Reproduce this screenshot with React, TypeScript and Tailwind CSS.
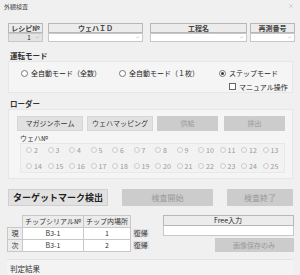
import { ChevronDown, X } from "lucide-react";

const font = { fontFamily: '"Noto Sans CJK JP", "Noto Sans", sans-serif' };

function Radio({ label, checked }: { label: string; checked?: boolean }) {
  return (
    <div className="flex items-center gap-[3px]">
      <span className="w-[7px] h-[7px] rounded-full border border-[#777] bg-white flex items-center justify-center">
        {checked && <span className="w-[3px] h-[3px] rounded-full bg-[#333]" />}
      </span>
      <span>{label}</span>
    </div>
  );
}

function WaferRadio({ n }: { n: number }) {
  return (
    <div className="w-[21.8px] flex items-center gap-[2px] text-[#999]">
      <span className="w-[6px] h-[6px] rounded-full border border-[#ccc] bg-[#f4f4f4]" />
      <span>{n}</span>
    </div>
  );
}

function Combo({ value, gray, className }: { value?: string; gray?: boolean; className: string }) {
  return (
    <div
      className={`h-[9px] border border-[#c8c8c8] flex items-center justify-end pr-[2px] gap-[4px] ${
        gray ? "bg-[#e4e4e4]" : "bg-white"
      } ${className}`}
    >
      {value && <span className="text-[7px] font-normal text-[#333]">{value}</span>}
      <ChevronDown size={5} strokeWidth={2} className="text-[#999]" />
    </div>
  );
}

export default function App() {
  const row1 = [2, 3, 4, 5, 6, 7, 8, 9, 10, 11, 12, 13];
  const row2 = [14, 15, 16, 17, 18, 19, 20, 21, 22, 23, 24, 25];

  return (
    <div className="w-[300px] h-[275px] bg-[#f0f0f0] text-[#222] overflow-hidden" style={font}>
      {/* title bar */}
      <div className="h-[12px] flex items-center justify-between pl-[4px] pr-[6px] text-[6px] text-[#444]">
        <span>外観検査</span>
        <X size={6} strokeWidth={1.5} className="text-[#999]" />
      </div>

      {/* header */}
      <div className="mt-[11px] flex pl-[8px] text-[7px] font-bold text-[#444]">
        <div className="w-[35px] flex flex-col">
          <div className="h-[10px] border border-[#b8b8b8] bg-[#ececec] flex items-center justify-center">レシピ№</div>
          <Combo value="1" gray className="w-[35px]" />
        </div>
        <div className="w-[95px] ml-[5px] flex flex-col">
          <div className="h-[10px] border border-[#b8b8b8] bg-[#ececec] flex items-center justify-center">ウェハＩＤ</div>
          <Combo className="w-[95px]" />
        </div>
        <div className="w-[97px] ml-[7px] flex flex-col">
          <div className="h-[10px] border border-[#b8b8b8] bg-[#ececec] flex items-center justify-center">工程名</div>
          <Combo className="w-[97px]" />
        </div>
        <div className="w-[45px] ml-[3px] flex flex-col">
          <div className="h-[10px] border border-[#b8b8b8] bg-[#ececec] flex items-center justify-center">再測番号</div>
          <Combo className="w-[45px]" />
        </div>
      </div>

      {/* 運転モード */}
      <div className="mt-[9px] h-[10px] pl-[10px] flex items-center text-[7.5px] font-bold text-[#333]">運転モード</div>
      <div className="ml-[8px] mr-[7px] h-[32px] bg-[#f5f5f5] border border-[#e6e6e6] text-[7px] text-[#222]">
        <div className="flex items-center mt-[6px]">
          <div className="ml-[12px] w-[98px]">
            <Radio label="全自動モード（全数）" />
          </div>
          <div className="w-[100px]">
            <Radio label="全自動モード（１枚）" />
          </div>
          <Radio label="ステップモード" checked />
        </div>
        <div className="flex items-center mt-[3px] ml-[220px] gap-[3px]">
          <span className="w-[7px] h-[7px] border border-[#666] bg-white" />
          <span>マニュアル操作</span>
        </div>
      </div>

      {/* ローダー */}
      <div className="mt-[6px] h-[10px] pl-[10px] flex items-center text-[7.5px] font-bold text-[#333]">ローダー</div>
      <div className="ml-[8px] mr-[7px] h-[70px] bg-[#f5f5f5] border border-[#e6e6e6] text-[7px]">
        <div className="flex mt-[6px] ml-[8px]">
          <div className="w-[66px] h-[15px] bg-[#e1e1e1] border border-[#d6d6d6] flex items-center justify-center text-[#333]">マガジンホーム</div>
          <div className="w-[66px] h-[15px] ml-[4px] bg-[#e1e1e1] border border-[#d6d6d6] flex items-center justify-center text-[#333]">ウェハマッピング</div>
          <div className="w-[61px] h-[15px] ml-[4px] bg-[#cccccc] flex items-center justify-center text-[#999]">供給</div>
          <div className="w-[61px] h-[15px] ml-[6px] bg-[#cccccc] flex items-center justify-center text-[#999]">排出</div>
        </div>
        <div className="ml-[11px] mt-[3px] h-[9px] flex items-center text-[#333]">ウェハ№</div>
        <div className="ml-[11px] mr-[7px] h-[30px] border border-[#e8e8e8] bg-[#f2f2f2] pl-[5px] flex flex-col justify-center gap-[5px] text-[7px]">
          <div className="flex">
            {row1.map((n) => (
              <WaferRadio key={n} n={n} />
            ))}
          </div>
          <div className="flex">
            {row2.map((n) => (
              <WaferRadio key={n} n={n} />
            ))}
          </div>
        </div>
      </div>

      {/* action buttons */}
      <div className="mt-[10px] flex pl-[8px]">
        <div className="w-[100px] h-[17px] bg-[#e1e1e1] border border-[#d0d0d0] flex items-center justify-center text-[9px] font-bold text-[#222]">ターゲットマーク検出</div>
        <div className="w-[91px] h-[17px] ml-[14px] bg-[#cccccc] flex items-center justify-center text-[8px] text-[#999]">検査開始</div>
        <div className="w-[66px] h-[17px] ml-[14px] bg-[#cccccc] flex items-center justify-center text-[8px] text-[#999]">検査終了</div>
      </div>

      {/* chips and free input */}
      <div className="mt-[9px] flex text-[7px] text-[#333]">
        <table className="ml-[7px] border-collapse">
          <thead>
            <tr className="h-[9px]">
              <th className="w-[15px] p-0" />
              <th className="w-[61px] p-0 border border-[#c8c8c8] bg-[#ececec] font-normal">チップシリアル№</th>
              <th className="w-[47px] p-0 border border-[#c8c8c8] bg-[#ececec] font-normal">チップ内場所</th>
              <th className="w-[18px] p-0" />
            </tr>
          </thead>
          <tbody>
            {[
              ["現", "B3-1", "1"],
              ["次", "B3-1", "2"],
            ].map((r) => (
              <tr key={r[0]} className="h-[9px] leading-[8px]">
                <td className="p-0 border border-[#c8c8c8] bg-[#ececec] text-center">{r[0]}</td>
                <td className="p-0 border border-[#c8c8c8] bg-white text-center">{r[1]}</td>
                <td className="p-0 border border-[#c8c8c8] bg-white text-center">{r[2]}</td>
                <td className="p-0 pl-[2px]">
                  <div className="h-[8px] bg-[#e1e1e1] flex items-center justify-center">復帰</div>
                </td>
              </tr>
            ))}
          </tbody>
        </table>
        <div className="ml-[14px] w-[131px] flex flex-col">
          <div className="h-[11px] border border-[#b8b8b8] bg-[#ececec] flex items-center justify-center text-[#222]">Free入力</div>
          <div className="h-[10px] border border-t-0 border-[#c8c8c8] bg-white" />
          <div className="mt-[2px] ml-[52px] w-[79px] h-[14px] bg-[#cccccc] flex items-center justify-center text-[#999]">画像保存のみ</div>
        </div>
      </div>

      {/* 判定結果 */}
      <div className="mt-[7px] ml-[7px] mr-[7px] border-t border-[#e2e2e2] bg-[#f3f3f3] h-[20px] pt-[3px] pl-[3px] text-[7.5px] text-[#333]">
        判定結果
      </div>
    </div>
  );
}
